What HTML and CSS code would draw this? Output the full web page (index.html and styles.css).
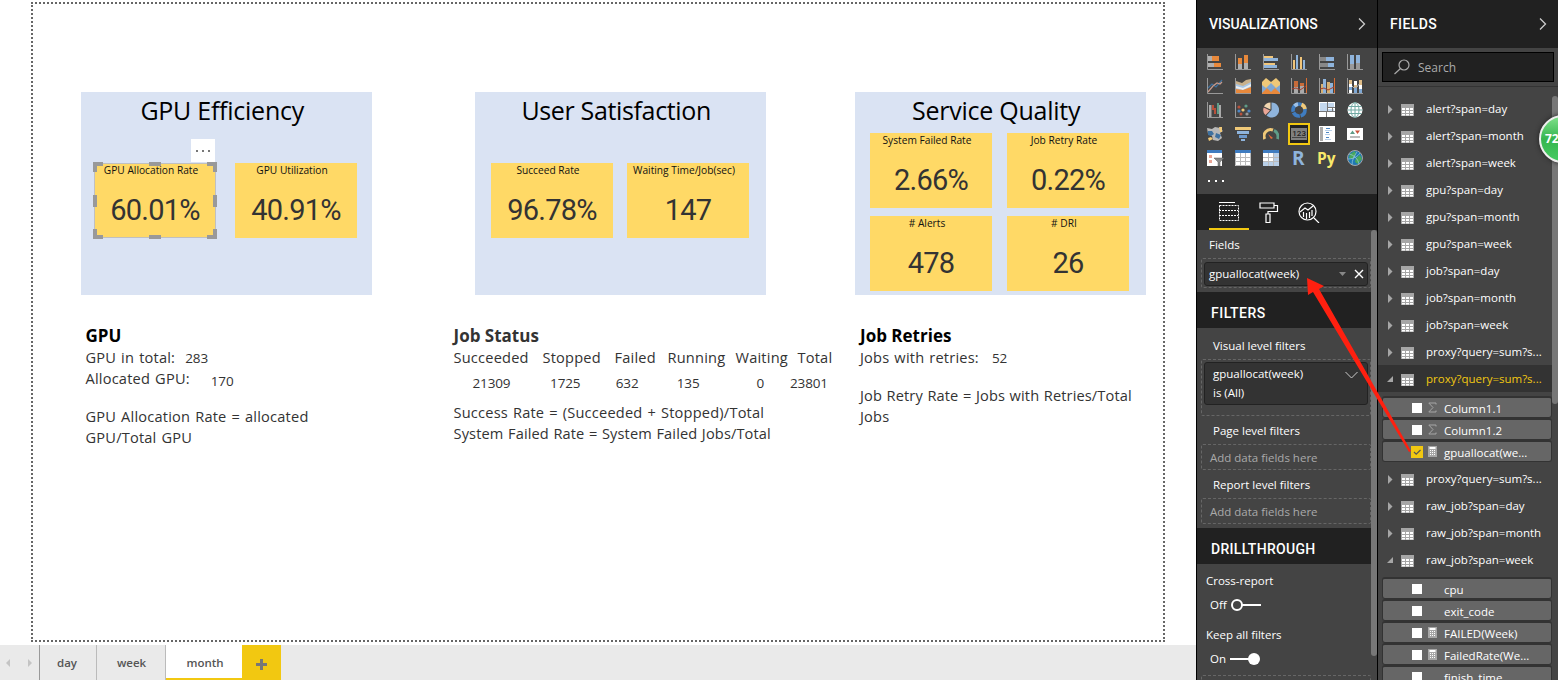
FILE: index.html
```html
<!DOCTYPE html>
<html lang="en">
<head>
<meta charset="utf-8">
<title>Report</title>
<link rel="stylesheet" href="styles.css">
</head>
<body>
<svg class="defs" width="0" height="0">
  <symbol id="table" viewBox="0 0 13 13"><path fill="#a6a6a6" d="M0 0h13v12H0z"/><path fill="#fff" d="M1 4h3v2H1zM5 4h3v2H5zM9 4h3v2H9zM1 7h3v2H1zM5 7h3v2H5zM9 7h3v2H9zM1 10h3v1.5H1zM5 10h3v1.5H5zM9 10h3v1.5H9z"/></symbol>
  <symbol id="calc" viewBox="0 0 9 11"><path fill="#a6a6a6" d="M0 0h9v11H0z"/><path fill="#fff" d="M1.5 1h6v2h-6zM2 4h1v1H2zM4 4h1v1H4zM6 4h1v1H6zM2 6h1v1H2zM4 6h1v1H4zM6 6h1v1H6zM2 8h1v1H2zM4 8h1v1H4zM6 8h1v1H6z"/></symbol>
  <symbol id="sigma" viewBox="0 0 9 11"><path fill="none" stroke="#a6a6a6" d="M8 2.5V1H.8L5 5.5.8 10H8V8.500"/></symbol>
  <symbol id="closed" viewBox="0 0 6 9"><path fill="#a6a6a6" d="M1 0v9L5.500 4.500z"/></symbol>
  <symbol id="open" viewBox="0 0 6 9"><path fill="#a6a6a6" d="M6 1v6H0z"/></symbol>
</svg>
<div class="app">
  <main class="report">
    <div class="canvas">
      <div class="panels">
        <section class="panel p1">
          <h2 class="t1">GPU Efficiency</h2>
          <div class="cards">
            <div class="card selected"><span class="label">GPU Allocation Rate</span><span class="num">60.01%</span>
              <span class="more"><i></i><i></i><i></i></span>
              <svg class="handles" width="124" height="77"><rect x="1.500" y="1.500" width="121" height="74" fill="none" stroke="#c0c0c0"/><path fill="#999" d="M0 0h10v4H4v6H0zM114 0h10v10h-4V4h-6zM0 67h4v6h6v4H0zM120 67h4v10h-10v-4h6zM56 0h12v4H56zM56 73h12v4H56zM0 33h4v12H0zM120 33h4v12h-4z"/></svg>
            </div>
            <div class="card"><span class="label">GPU Utilization</span><span class="num">40.91%</span></div>
          </div>
        </section>
        <section class="panel p2">
          <h2 class="t2">User Satisfaction</h2>
          <div class="cards">
            <div class="card"><span class="label">Succeed Rate</span><span class="num">96.78%</span></div>
            <div class="card"><span class="label wide">Waiting Time/Job(sec)</span><span class="num">147</span></div>
          </div>
        </section>
        <section class="panel p3">
          <h2 class="t3">Service Quality</h2>
          <div class="cards">
            <div class="card"><span class="label">System Failed Rate</span><span class="num">2.66%</span></div>
            <div class="card"><span class="label">Job Retry Rate</span><span class="num">0.22%</span></div>
            <div class="card"><span class="label"># Alerts</span><span class="num">478</span></div>
            <div class="card"><span class="label"># DRI</span><span class="num">26</span></div>
          </div>
        </section>
      </div>
      <div class="notes">
        <section class="note n1">
          <h3>GPU</h3>
          <p>GPU in total: <b class="v1">283</b></p>
          <p>Allocated GPU: <b class="v2">170</b></p>
          <p class="gap">GPU Allocation Rate = allocated</p>
          <p>GPU/Total GPU</p>
        </section>
        <section class="note n2">
          <h3 class="soft">Job Status</h3>
          <div class="status">
            <span>Succeeded</span><span>Stopped</span><span>Failed</span><span>Running</span><span>Waiting</span><span>Total</span>
          </div>
          <div class="values">
            <b>21309</b><b>1725</b><b>632</b><b>135</b><b>0</b><b>23801</b>
          </div>
          <p>Success Rate = (Succeeded + Stopped)/Total</p>
          <p class="tight">System Failed Rate = System Failed Jobs/Total</p>
        </section>
        <section class="note n3">
          <h3>Job Retries</h3>
          <p>Jobs with retries: <b class="v3">52</b></p>
          <p class="gap">Job Retry Rate = Jobs with Retries/Total</p>
          <p>Jobs</p>
        </section>
      </div>
    </div>
    <nav class="pages">
      <span class="arrows"><svg width="39" height="35"><path fill="#c4c4c4" d="M10 14v8l-4-4zM28 14v8l4-4z"/></svg></span>
      <span class="page day">day</span>
      <span class="page week">week</span>
      <span class="page month">month</span>
      <span class="add"><svg width="11" height="11"><path fill="#777" d="M4 0h3v4h4v3H7v4H4V7H0V4h4z"/></svg></span>
    </nav>
  </main>

  <aside class="viz">
    <header class="head"><span class="ht1">VISUALIZATIONS</span><svg width="8" height="12"><path fill="none" stroke="#ccc" stroke-width="1.300" d="M1 .5 6.500 6 1 11.500"/></svg></header>
    <div class="gallery">
      <svg viewBox="0 0 16 16"><path fill="#b0b0b0" d="M1 2h4v5H1zM1 9h6v4H1z"/><path fill="#e8893c" d="M5 2h7v5H5zM7 9h7v4H7z"/><path class="ax" d="M.5 0v15.500H16"/></svg>
      <svg viewBox="0 0 16 16"><path fill="#b0b0b0" d="M3 10h4v5H3zM9 8h4v7H9z"/><path fill="#e8893c" d="M3 4h4v6H3zM9 1h4v8H9z"/><path class="ax" d="M.5 0v15.500H16"/></svg>
      <svg viewBox="0 0 16 16"><path fill="#f0c57a" d="M1 2h9v2H1zM1 9h11v2H1z"/><path fill="#8fb4dc" d="M1 4h14v3H1zM1 11h13v3H1z"/><path class="ax" d="M.5 0v15.500H16"/></svg>
      <svg viewBox="0 0 16 16"><path fill="#f0c57a" d="M2 6h2v9H2zM9 3h2v12H9z"/><path fill="#8fb4dc" d="M5 1h2v14H5zM12 6h2v9h-2z"/><path class="ax" d="M.5 0v15.500H16"/></svg>
      <svg viewBox="0 0 16 16"><path fill="#888" d="M1 3h6v4H1zM1 9h8v4H1z"/><path fill="#8fb4dc" d="M7 3h8v4H7zM9 9h6v4H9z"/><path class="ax" d="M.5 0v15.500H16"/></svg>
      <svg viewBox="0 0 16 16"><path fill="#8fb4dc" d="M3 1h4v9H3zM9 1h4v8H9z"/><path fill="#999" d="M3 10h4v5H3zM9 9h4v6H9z"/><path class="ax" d="M.5 0v15.500H16"/></svg>

      <svg viewBox="0 0 16 16"><path fill="none" stroke="#3f719f" stroke-width="1.200" d="M1 10l4-4 4 3 6-7"/><path fill="none" stroke="#c79a8b" stroke-width="1.200" d="M1 14l5-6 4-3 3 1 2-2"/><path class="ax" d="M.5 0v15.500H16"/></svg>
      <svg viewBox="0 0 16 16"><path fill="#c9b18c" d="M1 3l6 2 4-3 5-1v14H1z"/><path fill="#a9c8e8" d="M1 6l7 2 8-4v11H1z"/><path fill="#eee" d="M1 8l7 2 8-4v2l-8 4-7-2z"/><path fill="#e8893c" d="M1 11l7 1 8-3v6H1z"/><path class="ax" d="M.5 0v15.500H16"/></svg>
      <svg class="broad" viewBox="0 0 18 16"><path fill="#efc878" d="M0 4l4-4 5 4 5-4 4 4v11H0z"/><path fill="#7fa8d4" d="M0 7l4 3 5-5 5 5 4-3v9H0z"/><path fill="#e8893c" d="M0 15l5-5 4 4 4-4 5 5v1H0z"/></svg>
      <svg viewBox="0 0 16 16"><path fill="#aaa" d="M3 9h4v6H3zM9 7h4v8H9z"/><path fill="#c86b39" d="M3 3h4v6H3zM9 5h4v3H9z"/><path fill="none" stroke="#a63f2b" d="M1 11l4-1 4 2 6-4"/><path class="ax" d="M.5 0v15.500H16"/><path stroke="#d86c31" d="M15.500 0v15"/></svg>
      <svg viewBox="0 0 16 16"><path fill="#d8b071" d="M2 6h2v9H2zM8 4h3v11H8z"/><path fill="#8fb4dc" d="M4 1h3v14H4zM11 5h3v10h-3z"/><path fill="none" stroke="#a63f2b" d="M1 11l4-1 4 2 6-3"/><path class="ax" d="M.5 0v15.500H16"/><path stroke="#d86c31" d="M15.500 0v15"/></svg>
      <svg viewBox="0 0 16 16"><path fill="#dfbd88" d="M2 2h3v7H2zM7 5h3v5H7zM12 2h3v5h-3z"/><path fill="#fff" d="M2 6h3v3H2zM7 3h3v4H7zM12 7h3v4h-3zM2 12h3v3H2z"/><path fill="#7fa8d4" d="M2 9h3v3H2zM7 10h3v5H7zM12 11h3v4h-3z"/><path fill="none" stroke="#aaa" d="M5 8l2 2 3-1 2-3"/><path class="ax" d="M.5 0v15.500H16"/></svg>

      <svg viewBox="0 0 16 16"><path fill="#aaa" d="M2 3h2.500v12H2zM12 3h2v12h-2z"/><path fill="#b8513b" d="M5 3h2v5H5zM7 6h2v6H7z"/><path fill="#5f9c88" d="M10 1h2v11h-2z"/><path class="ax" d="M.5 0v15.500H16"/></svg>
      <svg viewBox="0 0 16 16"><circle cx="11" cy="4" r="1.600" fill="#5f9c88"/><g fill="#b8513b"><circle cx="4" cy="5" r="1.600"/><circle cx="6" cy="12" r="1.500"/></g><circle cx="8" cy="8" r="1.600" fill="#efc878"/><circle cx="4" cy="9" r="1.600" fill="#4c86c4"/><circle cx="14" cy="9" r="1.600" fill="#4c86c4"/><circle cx="12" cy="12" r="1.600" fill="#999"/><path class="ax" d="M.5 0v15.500H16"/></svg>
      <svg viewBox="0 0 16 16"><path fill="#8fb4dc" d="M8.500.5a7.500 7.500 0 1 1-5 13L8.500 8z"/><path fill="#f1d6b0" d="M7.500.5v7L1 4.500A7.500 7.500 0 0 1 7.500.5z"/><path fill="#e9a596" d="M.7 5.500l6.300 3-4.500 4.500a7 7 0 0 1-1.800-7.500z"/></svg>
      <svg viewBox="0 0 16 16"><circle cx="8" cy="8" r="6" fill="none" stroke="#3f7cc0" stroke-width="3.600" stroke-dasharray="7.500 .8"/><path fill="none" stroke="#efc878" stroke-width="3.600" d="M10.500 2.500A6 6 0 0 1 14 7"/><path fill="none" stroke="#9fc0e4" stroke-width="3.600" d="M3.500 4A6 6 0 0 1 7 2.100"/></svg>
      <svg viewBox="0 0 16 16"><path fill="#fff" d="M0 0h16v15H0z"/><path fill="#c4d8ee" d="M1 1h7v8H1zM9 1h6v5H9zM9 7h6v2H9z"/><path stroke="#777" fill="none" d="M0 9.500h16M8.500 0v9M7.500 10v5M9 5.500h7M13.500 6v3"/></svg>
      <svg viewBox="0 0 16 16"><circle cx="8" cy="8" r="7.500" fill="#fff"/><path fill="none" stroke="#70a9a3" d="M8 .5v15M1.500 4.500h13M1.500 11.500h13M.5 8h15"/><ellipse cx="8" cy="8" rx="4" ry="7.500" fill="none" stroke="#70a9a3"/></svg>

      <svg viewBox="0 0 16 16"><path fill="#b8b8b8" d="M0 2l5 1 3-2 5 1 3 3-3 2 2 5-4 3-5-1-1-4-4-2z"/><path fill="#3f719f" d="M1 5h4l2 3-3 2-3-1zM9 7l5 2-2 4-4-2z"/><path fill="#efc878" d="M12 1h3v5h-2zM1 12l3-1 2 2-4 2z"/></svg>
      <svg viewBox="0 0 16 16"><path fill="#efc878" d="M0 1h16v3H0z"/><path fill="#8fb4dc" d="M2 5h12v3H2zM6 13h4v2H6z"/><path fill="#6e9acd" d="M4 9h8v3H4z"/></svg>
      <svg viewBox="0 0 16 16"><path fill="none" stroke="#efc878" stroke-width="3" d="M1.800 13A6.500 6.500 0 0 1 10 4"/><path fill="none" stroke="#5f9c88" stroke-width="3" d="M11 4.500a6.500 6.500 0 0 1 3.500 8.500"/><path fill="#e46b38" d="M5 8l5 4-2 1z"/></svg>
      <svg class="chosen" viewBox="0 0 22 22"><path fill="#222" stroke="#f2c811" stroke-width="2" d="M1 1h20v20H1z"/><path fill="#808080" d="M3 5h16v12H3z"/><text x="4.300" y="12.500">123</text><path stroke="#444" d="M4 14.500h14"/></svg>
      <svg viewBox="0 0 16 16"><path fill="#fff" d="M0 0h16v16H0z"/><path fill="#aaa" d="M1 1h3v14H1z"/><path fill="#4c86c4" d="M7 2h4v1H7zM7 6h3v1H7zM7 11h3v1H7z"/><path fill="#b8cfe8" d="M6 4h7v1H6zM6 8h5v1H6zM6 13h6v1H6z"/></svg>
      <svg viewBox="0 0 16 16"><path fill="#fff" d="M0 2h16v12H0z"/><path fill="#5f9c88" d="M3 8l2.500-3.500L8 8z"/><path fill="#c8553d" d="M8 4.500h5L10.500 8z"/><path fill="#bbb" d="M3 10h10v2H3z"/></svg>

      <svg class="broad" viewBox="0 0 18 16"><path fill="#fff" d="M1 0h15v16H1z"/><path fill="#3f7cc0" d="M1 0h15v3H1z"/><path fill="#e9a596" d="M3 5h3v3H3zM3 10h3v3H3z"/><path fill="#888" stroke="#555" stroke-width=".5" d="M8 8h10l-4 4v4h-2v-4z"/></svg>
      <svg viewBox="0 0 16 16"><path fill="#fff" d="M0 0h16v16H0z"/><path fill="#3f7cc0" d="M0 0h16v3H0z"/><path fill="none" stroke="#bbb" d="M0 7.500h16M0 11.500h16M5.500 3v13M10.500 3v13M.5 3v12.500h15V3"/></svg>
      <svg viewBox="0 0 16 16"><path fill="#fff" d="M0 0h16v16H0z"/><path fill="#b8cfe8" d="M11 3h5v13H0v-4h11z"/><path fill="#3f7cc0" d="M0 0h16v3H0z"/><path fill="none" stroke="#bbb" d="M0 7.500h16M0 11.500h16M5.500 3v13M10.500 3v13"/></svg>
      <span class="letter r">R</span>
      <span class="letter py">Py</span>
      <svg viewBox="0 0 16 16"><circle cx="8" cy="8" r="7.500" fill="#1f78b4" stroke="#a5a5a5"/><path fill="#48a75b" d="M3 4l5-3 1 4-4 4-3-1zM9 8l4-3 2 4-4 5-3-2z"/><path stroke="#9ccbe0" stroke-width=".7" fill="none" d="M2 4c5 1 9 5 10 10M1 9C7 9 11 6 13 3M5 15c0-5 2-9 5-13"/></svg>
      <span class="dots"><i></i><i></i><i></i></span>
    </div>
    <div class="modes">
      <span class="mode active"><svg width="22" height="20"><path stroke="#fff" d="M1 .5h16"/><g fill="none" stroke="#fff" stroke-dasharray="2 1"><path d="M1.500 3.500h19v15h-19zM1 8.500h19M1 13.500h19"/></g></svg></span>
      <span class="mode"><svg width="20" height="21"><path fill="none" stroke="#fff" stroke-width="1.200" d="M1 1h14v5H1zM15 3.500h3.500v6H9V12M7 12h4v8.500H7z"/></svg></span>
      <span class="mode"><svg width="22" height="21"><circle cx="9.500" cy="9.500" r="8.500" fill="none" stroke="#fff" stroke-width="1.200"/><path fill="none" stroke="#fff" stroke-width="1.200" d="M2 10l5-4 3 2 5-4M5.500 10v5M8.500 11v6M11.500 10v6M14 8v6M16 16l5 5"/></svg></span>
    </div>
    <div class="wells">
      <div class="scroll"></div>
      <div class="name fl">Fields</div>
      <div class="well"><div class="chip one"><span>gpuallocat(week)</span><svg width="26" height="12"><path fill="#888" d="M1 4h7L4.500 8z"/><path stroke="#fff" stroke-width="1.400" d="M17 2l8 8M25 2l-8 8"/></svg></div></div>
      <h4 class="hf">FILTERS</h4>
      <div class="name vl">Visual level filters</div>
      <div class="well tall"><div class="chip two"><span>gpuallocat(week)<br>is (All)</span><svg width="13" height="8"><path fill="none" stroke="#ccc" d="M.5 1l6 6 6-6"/></svg></div></div>
      <div class="name pl">Page level filters</div>
      <div class="well hint">Add data fields here</div>
      <div class="name rl">Report level filters</div>
      <div class="well hint">Add data fields here</div>
      <h4 class="hd">DRILLTHROUGH</h4>
      <div class="name cr">Cross-report</div>
      <div class="toggle"><span>Off</span><svg width="32" height="12"><circle cx="6" cy="6" r="5" fill="none" stroke="#fff" stroke-width="2"/><path stroke="#fff" stroke-width="2" d="M11 6h19"/></svg></div>
      <div class="name ka">Keep all filters</div>
      <div class="toggle"><span>On</span><svg width="32" height="12"><circle cx="24" cy="6" r="6" fill="#fff"/><path stroke="#fff" stroke-width="2" d="M0 6h22"/></svg></div>
      <div class="well last"></div>
    </div>
  </aside>

  <aside class="fields">
    <header class="head"><span class="ht2">FIELDS</span><svg width="8" height="12"><path fill="none" stroke="#ccc" stroke-width="1.300" d="M1 .5 6.500 6 1 11.500"/></svg></header>
    <div class="searchbar"><div class="search"><svg width="16" height="16"><circle cx="10" cy="6" r="5" fill="none" stroke="#aaa" stroke-width="1.200"/><path stroke="#aaa" stroke-width="1.200" d="M6.500 9.500L.5 15"/></svg>Search</div></div>
    <div class="list">
      <div class="scroll2"></div>
      <div class="row"><svg class="tri"><use href="#closed"/></svg><svg class="tb"><use href="#table"/></svg><span>alert?span=day</span></div>
      <div class="row"><svg class="tri"><use href="#closed"/></svg><svg class="tb"><use href="#table"/></svg><span>alert?span=month</span></div>
      <div class="row"><svg class="tri"><use href="#closed"/></svg><svg class="tb"><use href="#table"/></svg><span>alert?span=week</span></div>
      <div class="row"><svg class="tri"><use href="#closed"/></svg><svg class="tb"><use href="#table"/></svg><span>gpu?span=day</span></div>
      <div class="row"><svg class="tri"><use href="#closed"/></svg><svg class="tb"><use href="#table"/></svg><span>gpu?span=month</span></div>
      <div class="row"><svg class="tri"><use href="#closed"/></svg><svg class="tb"><use href="#table"/></svg><span>gpu?span=week</span></div>
      <div class="row"><svg class="tri"><use href="#closed"/></svg><svg class="tb"><use href="#table"/></svg><span>job?span=day</span></div>
      <div class="row"><svg class="tri"><use href="#closed"/></svg><svg class="tb"><use href="#table"/></svg><span>job?span=month</span></div>
      <div class="row"><svg class="tri"><use href="#closed"/></svg><svg class="tb"><use href="#table"/></svg><span>job?span=week</span></div>
      <div class="row"><svg class="tri"><use href="#closed"/></svg><svg class="tb"><use href="#table"/></svg><span>proxy?query=sum?s...</span></div>
      <div class="row current"><svg class="tri"><use href="#open"/></svg><svg class="tb"><use href="#table"/></svg><span>proxy?query=sum?s...</span></div>
      <div class="subs">
        <div class="sub"><i class="box"></i><svg class="kind"><use href="#sigma"/></svg><span>Column1.1</span></div>
        <div class="sub"><i class="box"></i><svg class="kind"><use href="#sigma"/></svg><span>Column1.2</span></div>
        <div class="sub"><i class="box on"><svg width="12" height="12"><path fill="none" stroke="#555" stroke-width="1.200" d="M3 6l2.200 2.200L9.500 4"/></svg></i><svg class="kind"><use href="#calc"/></svg><span>gpuallocat(we...</span></div>
      </div>
      <div class="row"><svg class="tri"><use href="#closed"/></svg><svg class="tb"><use href="#table"/></svg><span>proxy?query=sum?s...</span></div>
      <div class="row"><svg class="tri"><use href="#closed"/></svg><svg class="tb"><use href="#table"/></svg><span>raw_job?span=day</span></div>
      <div class="row"><svg class="tri"><use href="#closed"/></svg><svg class="tb"><use href="#table"/></svg><span>raw_job?span=month</span></div>
      <div class="row"><svg class="tri"><use href="#open"/></svg><svg class="tb"><use href="#table"/></svg><span>raw_job?span=week</span></div>
      <div class="subs">
        <div class="sub"><i class="box"></i><svg class="kind"></svg><span>cpu</span></div>
        <div class="sub"><i class="box"></i><svg class="kind"></svg><span>exit_code</span></div>
        <div class="sub"><i class="box"></i><svg class="kind"><use href="#calc"/></svg><span>FAILED(Week)</span></div>
        <div class="sub"><i class="box"></i><svg class="kind"><use href="#calc"/></svg><span>FailedRate(We...</span></div>
        <div class="sub"><i class="box"></i><svg class="kind"></svg><span>finish_time</span></div>
      </div>
    </div>
  </aside>
  <svg class="pointer" width="110" height="180"><path fill="#ff2010" d="M2 3l17 8-5 3 92 162-2 1L8 17l-5 3z"/></svg>
  <div class="ball">72</div>
</div>
</body>
</html>
```
FILE: styles.css
```css
* { box-sizing: border-box; }
body { margin: 0; background: #fff; font-family: "Open Sans", "Noto Sans", sans-serif; color: #333; }
h2, h3, h4, p { margin: 0; font-weight: 400; }
i, b { font-style: normal; font-weight: 400; }
svg { display: block; flex: none; }
.defs { position: absolute; }
.app { position: relative; display: flex; width: 1558px; height: 680px; overflow: hidden; white-space: nowrap; }

/* Report canvas */
.report { width: 1196px; height: 680px; display: flex; flex-direction: column; justify-content: space-between; padding-top: 2px; }
.canvas { margin-left: 31px; width: 1134px; height: 640px; border: 2px dotted #666; }
.panels { display: flex; padding: 88px 0 0 48px; }
.panel { width: 291.400px; height: 203px; background: #dae3f3; }
.p2 { margin-left: 102.600px; }
.p3 { margin-left: 88.600px; }
.panel h2 { height: 41px; line-height: 37px; font-size: 25px; color: #000; text-align: center; padding-right: 9px; }
.t1 { letter-spacing: -.25px; }
.t2 { letter-spacing: -.35px; }
.t3 { letter-spacing: -.25px; }
.cards { display: grid; grid-template-columns: 122px 122px; gap: 8px 19px; padding: 30px 0 0 13px; }
.p2 .cards { column-gap: 14px; padding-left: 16px; }
.p3 .cards { column-gap: 15px; padding: 0 0 0 15px; }
.card { position: relative; height: 75px; background: #ffd966; display: flex; flex-direction: column; }
.label { height: 15px; line-height: 14px; font-size: 10.200px; color: #111; text-align: center; padding-right: 8px; }
.num { font: 400 29px/67px Roboto, sans-serif; color: #333; text-align: center; letter-spacing: -.8px; }
.more { position: absolute; left: 97px; top: -24px; width: 24px; height: 23px; background: #fff; display: flex; justify-content: center; align-items: center; gap: 4px; }
.more i { width: 2px; height: 2px; background: #777; }
.handles { position: absolute; left: -1px; top: -1px; }

.notes { display: flex; padding: 30px 0 0 52.500px; font-size: 14.600px; line-height: 20px; letter-spacing: .2px; word-spacing: 1px; }
.n1 { width: 368px; }
.n2 { width: 406.500px; }
.note h3 { font-size: 17px; font-weight: 700; color: #000; height: 22px; line-height: 21px; letter-spacing: 0; word-spacing: 0; }
.note h3.soft { color: #333; }
.note b { font-size: 13.500px; letter-spacing: -.1px; }
.note p { height: 21px; }
.note .gap { margin-top: 17px; }
.n2 .tight, .n3 .gap { letter-spacing: .13px; word-spacing: .6px; }
.v1 { margin-left: 5px; }
.v2 { margin-left: 16px; position: relative; top: 2px; }
.v3 { margin-left: 8px; }
.status, .values { display: grid; grid-template-columns: 89px 72px 53px 68px 62px 50px; }
.status { height: 21px; }
.values { height: 34px; line-height: 30px; grid-template-columns: 57px 70px 58px 61px 64.500px 64px; }
.values b { text-align: right; }

.pages { display: flex; height: 35px; background: #eaeaea; font-size: 11.500px; font-weight: 600; line-height: 36px; text-align: center; color: #555; }
.arrows { width: 40px; border-right: 1px solid #999; }
.page { border-right: 1px solid #bbb; }
.day { width: 57px; padding-right: 2px; }
.week { width: 69px; padding-left: 1px; }
.month { width: 76px; background: #fff; border: 0; border-bottom: 2px solid #f2c811; padding-left: 2px; }
.add { width: 39px; background: #f2c811; display: flex; align-items: center; justify-content: center; padding-top: 3px; }

/* Visualizations pane */
.viz, .fields { width: 181px; background: #444; color: #fff; font-size: 11.500px; border-left: 1px solid #000; height: 680px; overflow: hidden; }
.head { height: 48px; background: #212121; display: flex; justify-content: space-between; align-items: center; padding: 0 11px 0 12px; font: 500 14px Roboto, sans-serif; }
.ht2 { letter-spacing: .4px; }
.gallery { height: 146px; padding: 6px 0 0 10px; display: grid; grid-template-columns: repeat(6, 28px); grid-auto-rows: 24px; }
.gallery svg { width: 16px; height: 16px; }
.gallery .broad { width: 18px; margin-left: -1px; }
.ax { fill: none; stroke: #999; }
.gallery .chosen { width: 22px; height: 22px; margin: -3px 0 0 -3px; }
.chosen text { font: 500 8px Roboto, sans-serif; fill: #222; }
.letter { font: 700 19px/16px "Open Sans", sans-serif; color: #8fb4dc; padding-left: 1px; }
.py { color: #f9e96b; font-size: 15.500px; padding-left: 0; margin-left: -2px; }
.dots { display: flex; gap: 5px; padding: 6px 0 0 1px; }
.dots i { width: 2px; height: 2px; background: #fff; }
.modes { height: 36px; background: #212121; display: flex; padding-left: 12px; }
.mode { width: 40px; display: flex; align-items: center; justify-content: center; }
.mode.active { border-bottom: 2px solid #f2c811; padding-top: 2px; }
.wells { position: relative; height: 450px; overflow: hidden; }
.scroll { position: absolute; right: 0; top: 0; width: 6px; height: 426px; border-radius: 3px; background: #777; }
.name { font-size: 11.500px; line-height: 30px; height: 28px; padding-left: 16px; }
.fl { padding-left: 12px; }
.well { margin-left: 4px; width: 170px; height: 30px; border: 1px dashed #666; border-radius: 2px; padding: 3px 2px; }
.chip { display: flex; justify-content: space-between; background: #333; border: 1px solid #222; border-radius: 3px; }
.one { height: 24px; line-height: 19px; padding: 0 3px 0 4px; align-items: center; }
.one span { padding-bottom: 2px; }
.two { height: 43px; line-height: 19px; padding: 1px 9px 0 8px; }
.two svg { margin-top: 7px; }
.wells h4 { height: 36px; background: #212121; font: 500 14px/42px Roboto, sans-serif; letter-spacing: .3px; padding-left: 14px; }
.wells .hf { margin-top: 4px; letter-spacing: .5px; }
.vl { height: 31px; line-height: 35px; }
.tall { height: 57px; padding-top: 2px; }
.hint { height: 26px; color: #aaa; line-height: 20px; padding-left: 8px; font-size: 11.500px; }
.hd { margin-top: 4px; }
.cr, .ka { padding-left: 9px; height: 29px; line-height: 34px; }
.toggle { display: flex; align-items: center; gap: 4px; height: 24px; padding-left: 13px; }
.toggle span { padding-bottom: 2px; }
.ka { height: 30px; line-height: 36px; }
.last { margin-top: 4px; }

/* Fields pane */
.searchbar { height: 39px; padding: 4px 4px 0; border-bottom: 1px solid #333; }
.search { width: 172px; height: 30px; background: #212121; border: 1px solid #000; display: flex; align-items: center; padding-left: 11px; gap: 8px; color: #aaa; font-size: 12px; }
.list { position: relative; height: 593px; padding-top: 8px; overflow: hidden; }
.scroll2 { position: absolute; right: 0; top: 9px; width: 6px; height: 308px; border-radius: 3px; background: #777; }
.row { height: 27px; display: flex; align-items: center; padding-left: 9px; }
.tri { width: 6px; height: 9px; margin: 2px 8px 0 0; }
.tb { width: 13px; height: 13px; margin: 3px 12px 0 0; }
.current { background: #333; color: #f2c811; margin-right: 6px; }
.row span { line-height: 25px; }
.subs { padding: 4px 6px 3px 4px; }
.sub { width: 170px; height: 22px; background: #666; border: 1px solid #333; border-top-width: 2px; border-radius: 3px; display: flex; align-items: center; padding-left: 28px; }
.sub span { padding-top: 2px; }
.box { width: 10px; height: 10px; background: #fff; margin: 0 6px 0 1px; }
.box.on { width: 12px; height: 12px; background: #f2c811; margin: 0 5px 0 0; }
.kind { width: 9px; height: 11px; margin-right: 7px; }

/* Annotation over the panes */
.pointer { position: absolute; left: 1305px; top: 275px; }
.ball { position: absolute; left: 1539px; top: 115px; width: 48px; height: 48px; border-radius: 50%; border: 2px solid #eee; background: linear-gradient(#7fe08a, #35b54e 50%, #46cb62); box-shadow: 0 0 5px #222; color: #fff; font: 700 12px/43px "Open Sans", sans-serif; padding-left: 4px; }
```
